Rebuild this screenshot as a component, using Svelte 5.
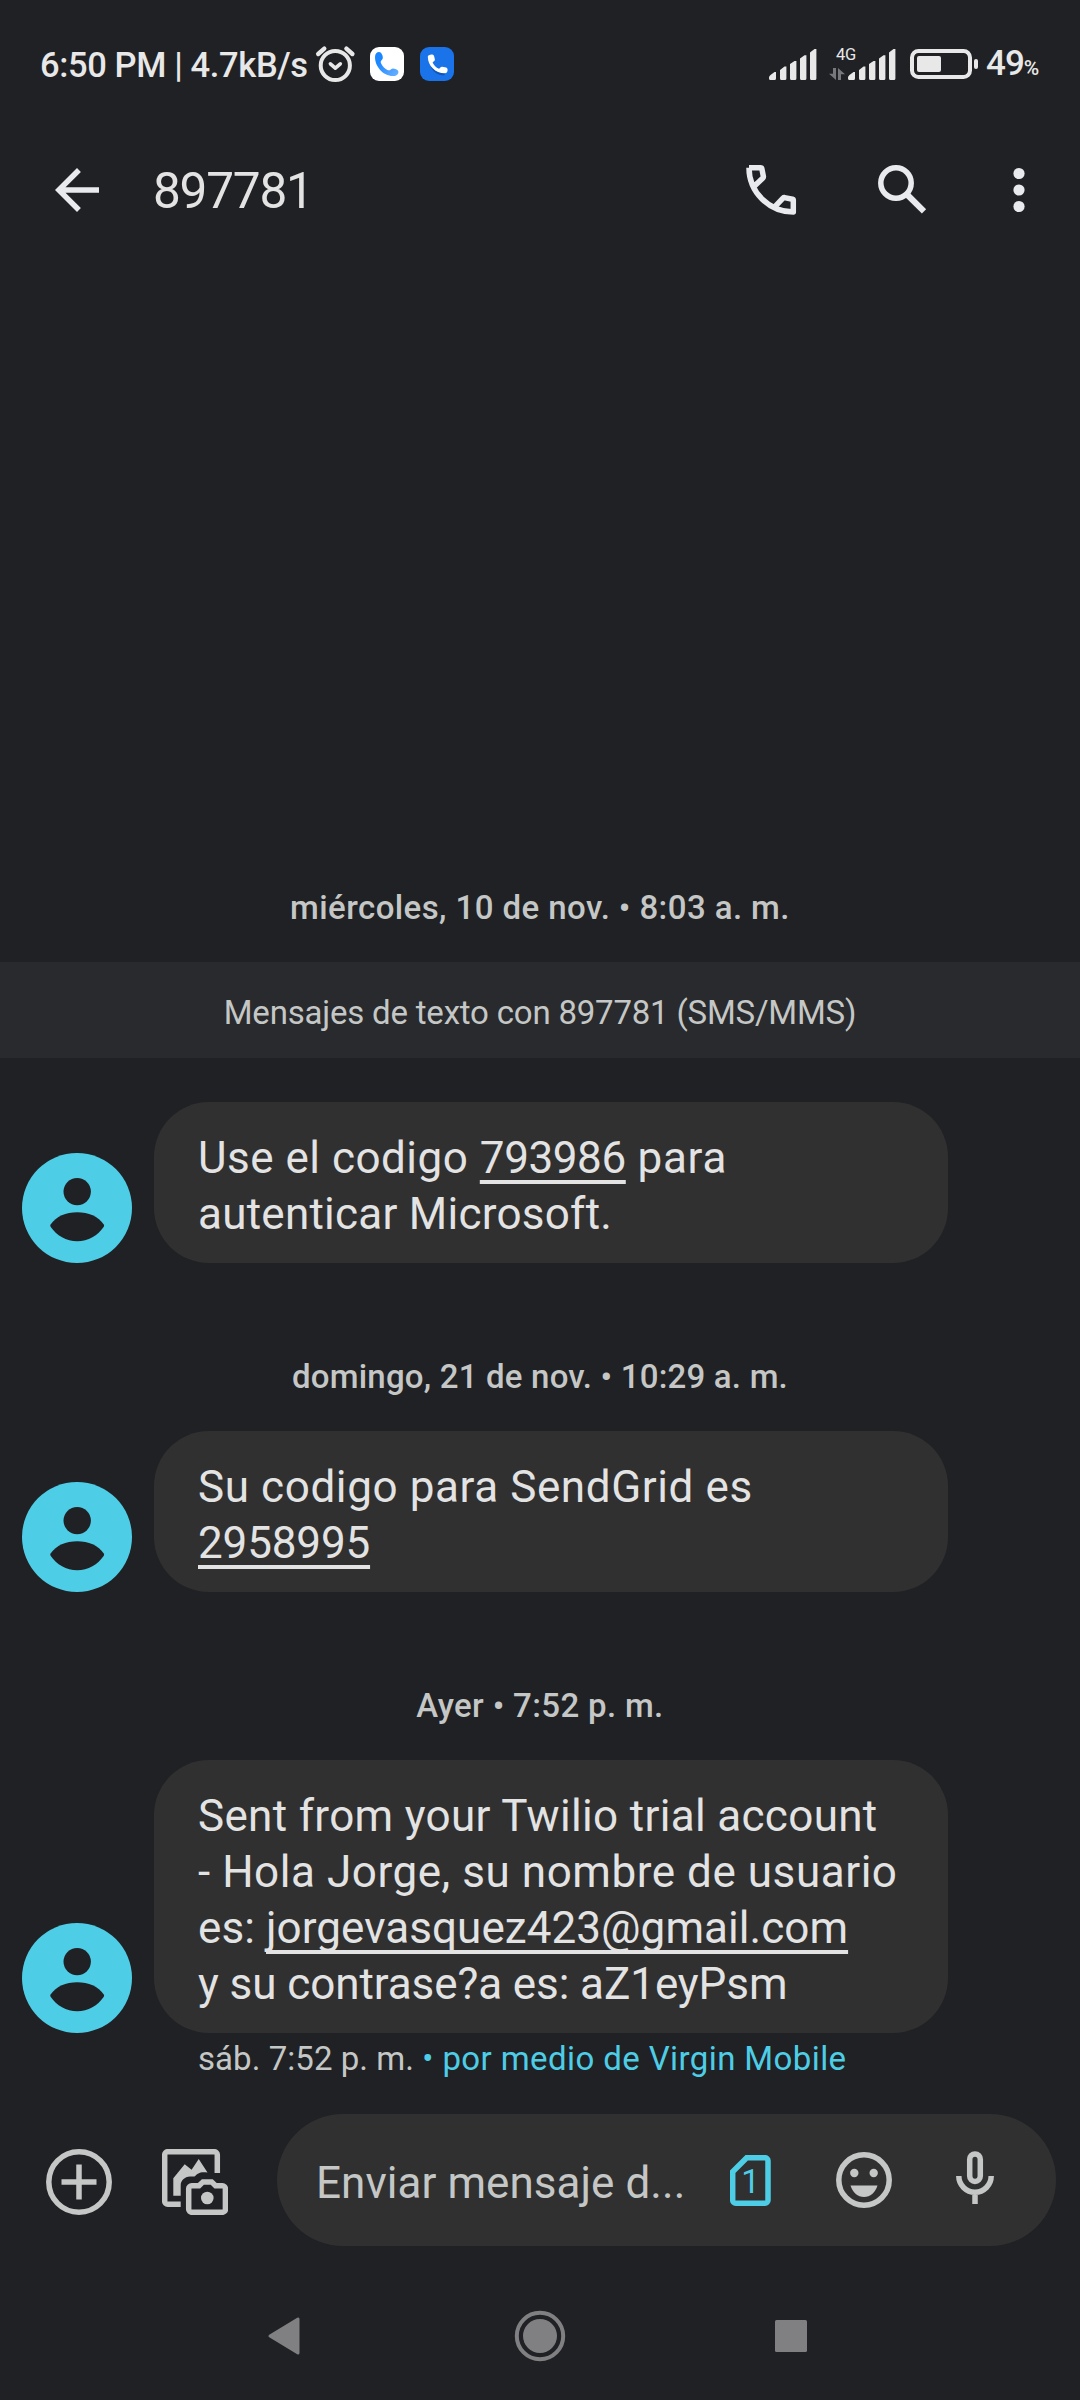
<script>
  // Each message line is a list of segments; `track` is its letter spacing in px.
  const threads = [
    {
      date: 'miércoles, 10 de nov. • 8:03 a. m.',
      track: 0.42,
      notice: 'Mensajes de texto con 897781 (SMS/MMS)',
      lines: [
        [
          { text: 'Use el codigo ', track: 0.5 },
          { text: '793986', track: -0.4, link: true },
          { text: ' para', track: 0.75 }
        ],
        [{ text: 'autenticar Microsoft.', track: 0.25 }]
      ]
    },
    {
      date: 'domingo, 21 de nov. • 10:29 a. m.',
      track: 0.2,
      lines: [
        [{ text: 'Su codigo para SendGrid es', track: 0.6 }],
        [{ text: '2958995', track: -0.15, link: true }]
      ]
    },
    {
      date: 'Ayer • 7:52 p. m.',
      track: 0.35,
      lines: [
        [{ text: 'Sent from your Twilio trial account', track: 0.33 }],
        [{ text: '- Hola Jorge, su nombre de usuario', track: 0.55 }],
        [
          { text: 'es: ', track: 0.1 },
          { text: 'jorgevasquez423@gmail.com', track: 0.06, link: true }
        ],
        [{ text: 'y su contrase?a es: aZ1eyPsm', track: -0.08 }]
      ],
      footer: { time: 'sáb. 7:52 p. m. ', carrier: '• por medio de Virgin Mobile' }
    }
  ];
</script>

{#snippet signal()}
  <svg class="signal" width="48" height="31" viewBox="0 0 48 31">
    <path d="M0 28.5Q0 27 1.5 26L5.500 23H7V29.500Q7 31 5.500 31H1.500Q0 31 0 29.500zM11 21L15.500 17.500H17.400V29.500Q17.400 31 16 31H12.500Q11 31 11 29.500zM21 15L25.500 12H27.400V29.500Q27.400 31 26 31H22.500Q21 31 21 29.500zM31 9.500L35.500 6.300H37.400V29.500Q37.400 31 36 31H32.500Q31 31 31 29.500zM41 3.500L45.500 0H47.400V29.500Q47.400 31 46 31H42.500Q41 31 41 29.500z" />
  </svg>
{/snippet}

<div class="screen">
  <div class="status">
    <span class="clock">6:50 PM | 4.7kB/s</span>
    <svg class="alarm" width="41" height="38" viewBox="0 0 41 38">
      <circle cx="20.300" cy="20.500" r="14.600" stroke-width="4" />
      <path d="M3.200 9L9.300 3.700M31.400 3.700L37.400 9" stroke-width="4.400" />
      <path d="M15.400 18.800L20.300 23.200L25.300 18.800" stroke-width="3.600" />
    </svg>
    <svg class="app" width="34" height="34" viewBox="0 0 34 34">
      <defs>
        <linearGradient id="handset" x1="0" y1="0" x2="1" y2="1">
          <stop offset="0.300" stop-color="#1a86ff" />
          <stop offset="1" stop-color="#6fb3ff" />
        </linearGradient>
      </defs>
      <rect width="34" height="34" rx="9" fill="#fff" />
      <path fill="url(#handset)" d="M5 10C5 5 9.500 3.800 11.300 6.200C13.200 9 13.400 11.500 11.800 13C10.600 14 10.500 15 11 16.200C12.600 19.400 14.600 21.500 17.400 22.900C18.800 23.700 19.800 23.300 20.800 22.400C22.600 20.700 25.500 21.700 27.600 23.200C29.700 25.200 27.600 29 23.500 29C13 29.300 5 19.500 5 10z" />
    </svg>
    <svg class="app second" width="34" height="34" viewBox="0 0 34 34">
      <rect width="34" height="34" rx="9" fill="#1a73e8" />
      <path fill="#0f56b8" d="M9 13L13 18L22 25L27 24L24 28.500C15 28 10 22 9 13z" />
      <path fill="#fff" d="M7.800 9.800C7.800 7.600 13 6.500 14 8.800L14.900 12.600C15 14.200 13.300 14.400 12.600 15.400C14 18.400 16 20.400 19 21.700C20.200 21 20.600 19.500 22.200 19.700L26.200 20.600C28.600 21.500 27.700 26.300 25.200 26.300C15.500 26.500 7.800 18.800 7.800 9.800z" />
    </svg>

    <div class="indicators">
      {@render signal()}
      <div class="data">
        <span class="net">4G</span>
        <svg class="updown" width="16" height="12" viewBox="0 0 16 12">
          <path d="M4 0H7V12L0 5.800H4zM9 12V0L16 6.200H12V12z" />
        </svg>
      </div>
      {@render signal()}
      <svg class="battery" width="68" height="30" viewBox="0 0 68 30">
        <rect x="2" y="2" width="58" height="26" rx="6.500" fill="none" stroke="#e8e8e8" stroke-width="4" />
        <rect x="7" y="7" width="24" height="16" rx="2" />
        <rect x="64" y="10" width="4" height="10" rx="2" />
      </svg>
      <span class="percent">49<small>%</small></span>
    </div>
  </div>

  <header>
    <svg width="66" height="66" viewBox="0 0 24 24"><path d="M20 11H7.830l5.590-5.590L12 4l-8 8 8 8 1.410-1.410L7.830 13H20v-2z" /></svg>
    <h1>897781</h1>
    <svg class="line" width="66" height="66" viewBox="0 0 66 66">
      <path d="M11 10.700H22.800Q23.600 10.700 23.800 11.500L25.400 19.500Q25.500 20.400 24.900 21L16.500 29M11 10.700C11 35 31 55 55.300 55V43.200Q55.300 42.400 54.500 42.200L46.500 40.600Q45.600 40.500 45 41.100L37.200 49.300" stroke-linejoin="round" />
    </svg>
    <svg class="line search" width="66" height="66" viewBox="0 0 66 66">
      <circle cx="26" cy="26" r="15.200" />
      <path d="M37.500 38L54 54.300" stroke-width="6" />
    </svg>
    <svg class="more" width="66" height="66" viewBox="0 0 66 66">
      <circle cx="33" cy="16.500" r="5.600" /><circle cx="33" cy="33" r="5.600" /><circle cx="33" cy="49.500" r="5.600" />
    </svg>
  </header>

  <main>
    {#each threads as thread}
      <section>
        <time style:letter-spacing="{thread.track}px">{thread.date}</time>
        {#if thread.notice}<p class="notice">{thread.notice}</p>{/if}
        <div class="message">
          <svg class="avatar" width="110" height="110" viewBox="0 0 110 110">
            <circle cx="55" cy="55" r="55" fill="#4ecde6" />
            <circle cx="55.200" cy="38.600" r="13.700" />
            <path d="M28.600 73.800Q27.900 72.600 28.600 71.500C34 63.500 44 59.300 55.200 59.300S76.400 63.500 81.800 71.500Q82.500 72.600 81.800 73.800C76 82.500 66 88.200 55.200 88.200S34.400 82.500 28.600 73.800z" />
          </svg>
          <div class="bubble">
            {#each thread.lines as line}
              <div class="row">{#each line as part}<span class:link={part.link} style:letter-spacing="{part.track}px">{part.text}</span>{/each}</div>
            {/each}
          </div>
        </div>
        {#if thread.footer}
          <p class="footer">{thread.footer.time}<span>{thread.footer.carrier}</span></p>
        {/if}
      </section>
    {/each}
  </main>

  <div class="composer">
    <svg class="tool" width="66" height="66" viewBox="0 0 66 66">
      <circle cx="33" cy="33" r="30.200" /><path d="M33 15.500V50.500M15.500 33H50.500" />
    </svg>
    <svg class="tool" width="66" height="66" viewBox="0 0 66 66">
      <path d="M55.300 24V5.700a3 3 0 0 0-3-3H5.700a3 3 0 0 0-3 3V52.300a3 3 0 0 0 3 3H18.700" />
      <path class="solid" d="M11.300 46.700V29.300L22.700 15.300L29.600 20.800L36.700 10L45.500 23.500C38 22.500 36 24 32.500 27.600H28C22.500 28 18.700 31.500 18.700 36.500V46.700z" />
      <path d="M29.700 36.800H37L41 32.900H49.600L53.600 36.800H60.400a3 3 0 0 1 3 3V60.300a3 3 0 0 1-3 3H29.700a3 3 0 0 1-3-3V39.800a3 3 0 0 1 3-3z" />
      <circle class="solid" cx="45.300" cy="49" r="6.300" />
    </svg>
    <div class="field">
      <span class="placeholder">Enviar mensaje d...</span>
      <svg class="sim" width="41" height="51" viewBox="0 0 41 51">
        <path d="M16.700 2.700H35a3 3 0 0 1 3 3V45.200a3 3 0 0 1-3 3H5.700a3 3 0 0 1-3-3V16.700z" />
        <text x="20.500" y="37.500">1</text>
      </svg>
      <svg class="emoji" width="56" height="56" viewBox="0 0 56 56">
        <circle cx="28" cy="28" r="25.200" />
        <circle class="solid" cx="18.300" cy="21" r="4.200" /><circle class="solid" cx="37.700" cy="21" r="4.200" />
        <path class="solid" d="M14.500 33.500H41.500C39.300 40.500 34.200 45 28 45S16.700 40.500 14.500 33.500z" />
      </svg>
      <svg class="mic" width="66" height="66" viewBox="0 3 66 66">
        <rect x="27.700" y="10" width="10.600" height="27.400" rx="5.300" />
        <path d="M16.800 32a16.200 16.200 0 0 0 32.400 0M33 48V60" />
      </svg>
    </div>
  </div>

  <nav>
    <svg width="34" height="40" viewBox="0 0 34 40"><path d="M3 20L31 3V37z" stroke="#808082" stroke-width="3" stroke-linejoin="round" /></svg>
    <svg class="home" width="52" height="52" viewBox="0 0 52 52"><circle cx="26" cy="26" r="23.200" fill="none" stroke="#808082" stroke-width="4" /><circle cx="26" cy="26" r="17" /></svg>
    <svg width="32" height="32" viewBox="0 0 32 32"><rect width="32" height="32" rx="1.500" /></svg>
  </nav>
</div>

<style>
  :global(body) { background: #202124; }
  .screen {
    width: 1080px;
    height: 2400px;
    display: flex;
    flex-direction: column;
    overflow: hidden;
    background: #202124;
    color: #e3e3e3;
    font-family: Roboto, "Liberation Sans", sans-serif;
  }
  svg { display: block; flex: none; }
  p, h1 { margin: 0; font-weight: 400; }

  .status {
    height: 128px;
    box-sizing: border-box;
    padding: 0 0 0 40px;
    display: flex;
    align-items: center;
    color: #e8e8e8;
    fill: #e8e8e8;
    white-space: nowrap;
  }
  .clock {
    width: 275px;
    padding-top: 2px;
    font-size: 34.5px;
    font-weight: 500;
    line-height: 40px;
    letter-spacing: -0.38px;
  }
  .alarm { fill: none; stroke: #e8e8e8; stroke-linecap: round; stroke-linejoin: round; }
  .app { margin-left: 14px; }
  .app.second { margin-left: 16px; }
  .indicators { display: flex; align-items: center; margin-left: 315px; }
  .signal { margin-top: 1px; }
  .data { position: relative; width: 16px; height: 31px; margin: 0 3px 0 12px; display: flex; align-items: flex-end; }
  .updown { fill: #77787b; }
  .net { position: absolute; left: 7px; top: -4px; font-size: 16.5px; line-height: 20px; letter-spacing: -0.3px; }
  .battery { margin-left: 14px; }
  .percent {
    margin-left: 8px;
    padding-top: 3px;
    font-size: 35px;
    font-weight: 500;
    line-height: 40px;
    letter-spacing: -1px;
  }
  .percent small { font-size: 21px; }

  header {
    height: 124px;
    box-sizing: border-box;
    padding: 0 28px 0 44px;
    display: flex;
    align-items: center;
    fill: #e8eaed;
  }
  h1 { flex: 1; margin-left: 43px; padding-top: 1px; font-size: 49.500px; line-height: 60px; letter-spacing: -1.200px; }
  .line { fill: none; stroke: #e8eaed; stroke-width: 5.500; }
  .search { margin-left: 66px; }
  .more { margin-left: 50px; }

  main { flex: 1; display: flex; flex-direction: column; justify-content: flex-end; gap: 94px; padding-bottom: 35px; }
  time {
    display: block;
    height: 40px;
    margin-bottom: 34px;
    text-align: center;
    font-size: 33px;
    font-weight: 500;
    line-height: 40px;
    color: #c4c7c5;
  }
  .notice {
    height: 96px;
    margin-bottom: 44px;
    background: #292a2d;
    color: #c4c7c5;
    font-size: 33px;
    line-height: 102px;
    letter-spacing: -0.2px;
    text-align: center;
  }
  .message { display: flex; align-items: flex-end; gap: 22px; padding-left: 22px; }
  .avatar { fill: #202124; }
  .bubble {
    width: 794px;
    box-sizing: border-box;
    padding: 28px 30px 21px 44px;
    border-radius: 55px;
    background: #303030;
    font-size: 44px;
    line-height: 56px;
  }
  .row { height: 56px; white-space: pre; }
  .link {
    text-decoration: underline;
    text-decoration-thickness: 4px;
    text-underline-offset: 7px;
    text-decoration-skip-ink: none;
  }
  .footer {
    height: 40px;
    margin-top: 6px;
    padding-left: 198px;
    white-space: pre;
    font-size: 33px;
    line-height: 40px;
    letter-spacing: 0.05px;
    color: #c4c7c5;
  }
  .footer span { color: #4ecde6; letter-spacing: 0.4px; }

  .composer { height: 132px; display: flex; align-items: center; padding-left: 46px; }
  .composer svg { fill: none; stroke: #c4c7c5; stroke-width: 5.500; }
  .composer .solid { fill: #c4c7c5; stroke: none; }
  .tool { margin: 4px 50px 0 0; }
  .field {
    width: 779px;
    height: 132px;
    box-sizing: border-box;
    margin-left: -1px;
    padding-left: 39px;
    border-radius: 66px;
    background: #303030;
    display: flex;
    align-items: center;
  }
  .placeholder { width: 414px; padding-top: 6px; font-size: 44px; line-height: 56px; letter-spacing: 0.05px; white-space: nowrap; color: #c4c7c5; }
  .composer .sim { stroke: #4ecde6; }
  .sim text { fill: #4ecde6; stroke: none; font-size: 33px; text-anchor: middle; }
  .emoji { margin-left: 65px; }
  .mic { margin-left: 50px; }

  nav { height: 154px; box-sizing: border-box; padding: 25px 273px 0 267px; display: flex; align-items: center; justify-content: space-between; fill: #808082; }
  .home { margin-left: 4px; }
</style>
